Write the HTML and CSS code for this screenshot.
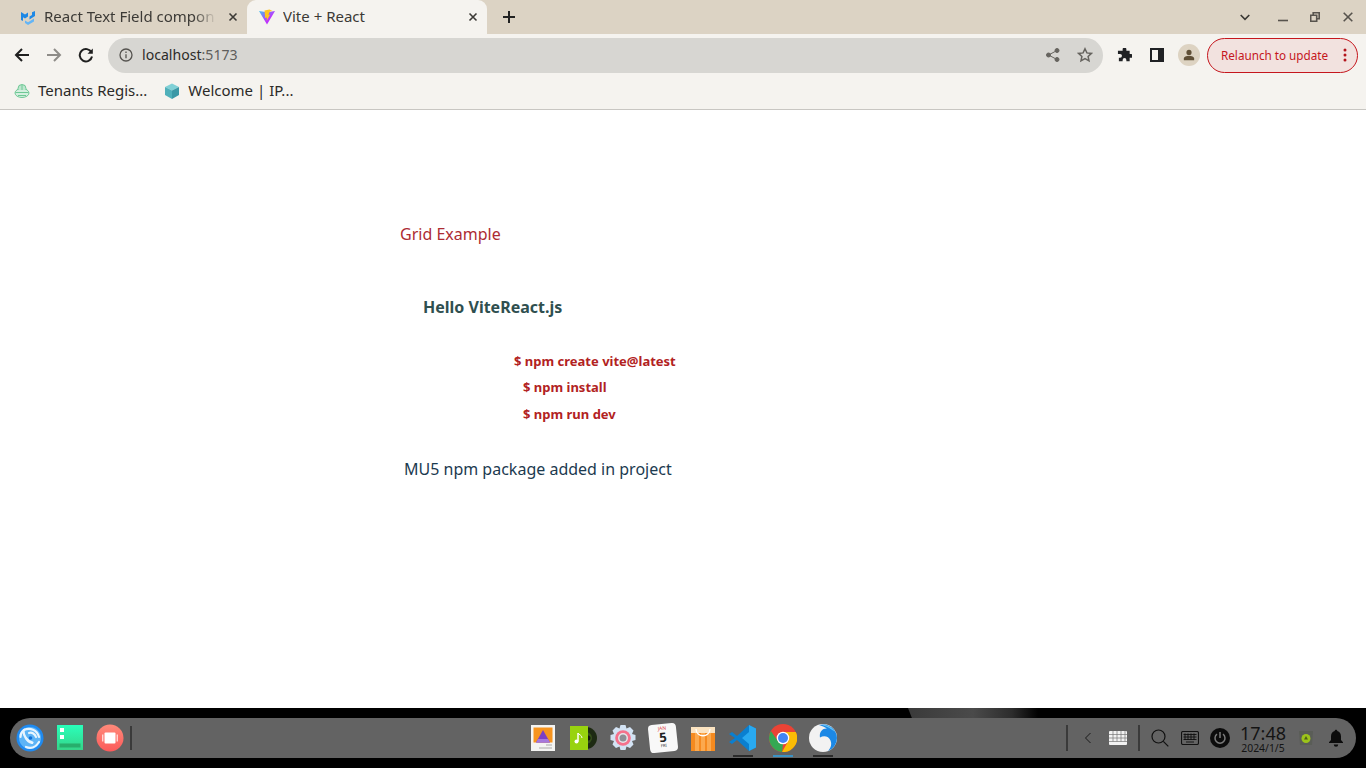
FILE: index.html
```html
<!DOCTYPE html>
<html>
	<head>
		<meta charset="utf-8">
		<title>Vite + React</title>
		<link rel="stylesheet" href="styles.css">
	</head>
	<body>
		<div class="tabstrip">
			<div class="tab">
				<svg class="favicon" viewBox="0 0 16 16"><path fill="#1e88e5" d="M1 3l4 2.500L8 3.500v4L5 9.500 3 8.200V12L1 11z"/><path fill="#1e88e5" d="M9.500 7.500L12 6V3.200l3-1.200v5l-5.500 3.500z"/><path fill="#64b5f6" d="M5 11.500l3 1.800 6-3.800v3L8 16l-3-2z"/></svg>
				<span class="tab-title fade">React Text Field compon</span>
				<svg class="tab-close" viewBox="0 0 10 10"><path d="M1.500 1.500l7 7M8.500 1.500l-7 7"/></svg>
			</div>
			<div class="tab active">
				<svg class="favicon" viewBox="0 0 16 16"><defs><linearGradient id="vg" x1="0" y1="0" x2="1" y2="1"><stop offset="0" stop-color="#41c5ee"/><stop offset=".6" stop-color="#bd34fe"/></linearGradient></defs><path fill="url(#vg)" d="M0 2l8 1.300L16 2 8 15.500z"/><path fill="#ffc51f" d="M10.500 .5L5.500 1.500l.7 7.500 1.800-.5-.4 3.500 3.600-6.500-1.800.4 1.400-3.400 2.700-.5z"/></svg>
				<span class="tab-title">Vite + React</span>
				<svg class="tab-close" viewBox="0 0 10 10"><path d="M1.500 1.500l7 7M8.500 1.500l-7 7"/></svg>
			</div>
			<svg class="new-tab" viewBox="0 0 14 14"><path d="M7 1v12M1 7h12"/></svg>
			<div class="window-btns">
				<svg class="win-chevron" viewBox="0 0 10 7"><path d="M.7 1l4.300 4.300L9.300 1"/></svg>
				<svg class="win-min" viewBox="0 0 10 10"><path d="M0 8.500h10"/></svg>
				<svg class="win-max" viewBox="0 0 10 10"><path d="M.7 3.200h6v6h-6zM3.200 3.200V.7h6v6H6.700"/></svg>
				<svg class="win-close" viewBox="0 0 10 10"><path d="M.7.7l8.600 8.600M9.300.7L.7 9.300"/></svg>
			</div>
		</div>

		<div class="toolbar">
			<svg class="nav" viewBox="0 0 16 16"><path d="M15 8H2M8 2L2 8l6 6"/></svg>
			<svg class="nav off" viewBox="0 0 16 16"><path d="M1 8h13M8 2l6 6-6 6"/></svg>
			<svg class="nav" viewBox="0 0 16 16"><path d="M13.500 5.500A6.200 6.200 0 1 0 14 9.500"/><path class="solid" d="M14.800 1.500v5.300H9.500z"/></svg>
			<div class="omnibox">
				<svg class="info" viewBox="0 0 14 14"><circle cx="7" cy="7" r="6"/><path d="M7 6.200v4M7 3.500v1.400"/></svg>
				<span class="url">localhost<span class="port">:5173</span></span>
				<svg class="share" viewBox="0 0 14 14"><circle cx="11" cy="2.500" r="2"/><circle cx="11" cy="11.500" r="2"/><circle cx="2.500" cy="7" r="2"/><path d="M11 2.500L2.500 7l8.500 4.500"/></svg>
				<svg class="star" viewBox="0 0 16 16"><path d="M8 1.800l1.900 4.100 4.500.5-3.300 3 .9 4.400L8 11.600l-4 2.200.9-4.400-3.300-3 4.500-.5z"/></svg>
			</div>
			<svg class="puzzle" viewBox="0 0 16 16"><path d="M6 1.500a2 2 0 0 1 4 0V3h3.500v3.500H15a2 2 0 0 1 0 4h-1.500V14H10v-1.300a2 2 0 0 0-4 0V14H2v-3.700h1.300a2 2 0 0 0 0-4H1V3h5z"/></svg>
			<div class="side-panel"><span></span></div>
			<div class="avatar">
				<svg viewBox="0 0 14 14"><circle cx="7" cy="4" r="3"/><path d="M1 13v-2c0-2 3-3.200 6-3.200s6 1.200 6 3.200v2z"/></svg>
			</div>
			<div class="relaunch">
				<span>Relaunch to update</span>
				<svg viewBox="0 0 4 14"><circle cx="2" cy="2" r="1.500"/><circle cx="2" cy="7" r="1.500"/><circle cx="2" cy="12" r="1.500"/></svg>
			</div>
		</div>

		<div class="bookmarks">
			<div class="bookmark">
				<svg viewBox="0 0 16 16" fill="none" stroke="#6ec895"><ellipse cx="8" cy="10" rx="7" ry="4.500" fill="#d4efdf"/><path d="M4 7V5.500a4 4 0 0 1 8 0V7" fill="#bfe6cf"/><path d="M1.500 9.500h13M4 12.500h8M8 2v5"/></svg>
				<span>Tenants Regis...</span>
			</div>
			<div class="bookmark">
				<svg viewBox="0 0 16 16"><path fill="#7fd0d6" d="M8 .5l7 3.500L8 7.500 1 4z"/><path fill="#4fb0ba" d="M1 4l7 3.500V16l-7-4z"/><path fill="#3b98a6" d="M15 4L8 7.500V16l7-4z"/></svg>
				<span>Welcome | IP...</span>
			</div>
		</div>

		<main class="page">
			<p class="heading">Grid Example</p>
			<p class="hello">Hello ViteReact.js</p>
			<p class="cmd first">$ npm create vite@latest</p>
			<p class="cmd second">$ npm install</p>
			<p class="cmd third">$ npm run dev</p>
			<p class="note">MU5 npm package added in project</p>
		</main>

		<div class="taskbar">
			<div class="wallpaper"></div>
			<div class="dock">
				<div class="dock-left">
					<svg class="ic" viewBox="0 0 28 28"><circle cx="14" cy="14" r="13.500" fill="#1f8af0"/><circle cx="14" cy="14" r="11" fill="#5db4f6"/><g fill="none" stroke="#e8f5fe" stroke-width="2.200" stroke-linecap="round"><path d="M8 6c6-3 13 0 15 7"/><path d="M4.500 13c0-3 1-5 3-6.500 0 6 3 10 9 12"/><path d="M10 23c5 2 10 0 13-5"/><path d="M13 9c3-1 6 1 7 4"/><path d="M10 14c1 3 3 4.500 6 5"/></g><circle cx="14.500" cy="14" r="1.800" fill="#1270d8"/></svg>
					<svg class="ic" viewBox="0 0 28 28"><defs><linearGradient id="gs" x1="0" y1="0" x2="0" y2="1"><stop offset="0" stop-color="#2affbb"/><stop offset="1" stop-color="#35d488"/></linearGradient></defs><rect x="1" y="1" width="26" height="25" fill="url(#gs)"/><rect x="4" y="4" width="4" height="4" fill="#fff"/><rect x="4" y="11" width="4" height="4" fill="#fff"/><rect x="3.500" y="19.500" width="21" height="4" fill="#27ae6c"/></svg>
					<svg class="ic" viewBox="0 0 28 28"><defs><linearGradient id="rd" x1="0" y1="0" x2="0" y2="1"><stop offset="0" stop-color="#ff8a7a"/><stop offset="1" stop-color="#fb5a5a"/></linearGradient></defs><circle cx="14" cy="14" r="13.500" fill="url(#rd)"/><rect x="8.500" y="8.500" width="11" height="11" rx="1" fill="#fff"/><path d="M6.800 10.500v7M21.200 10.500v7" stroke="#fff"/></svg>
					<span class="divider"></span>
				</div>
				<div class="dock-center">
					<svg class="ic" viewBox="0 0 28 28"><rect x="2" y="1" width="24" height="26" fill="#f4f4f2"/><rect x="4.500" y="3.500" width="19" height="15" fill="#f7941e"/><path d="M14 6l7 12.500H7z" fill="#7c3fc4"/><path d="M9 15h10l2 3.500H7z" fill="#a678dc"/><path d="M17 21h6M10 24h13" stroke="#aaa"/></svg>
					<svg class="ic" viewBox="0 0 28 28"><circle cx="17" cy="14" r="11" fill="#1d2a12"/><circle cx="17" cy="14" r="6" fill="#35501a"/><circle cx="19" cy="14" r="2.500" fill="#111"/><rect x="1" y="2" width="18" height="24" fill="#98d30f"/><path d="M9 9v8.500" stroke="#fff" stroke-width="1.500"/><path d="M9 9c1 2 4 2 4 5" stroke="#fff" fill="none"/><circle cx="7.500" cy="17.500" r="2" fill="#fff"/></svg>
					<svg class="ic" viewBox="0 0 28 28"><path fill="#d3e3f4" d="M11.500 1h5l1 3.500 3.500-1.500 3.500 3.500-1.500 3.500 3.500 1v5l-3.500 1 1.500 3.500-3.500 3.500-3.500-1.500-1 3.500h-5l-1-3.500-3.500 1.500-3.500-3.500 1.500-3.500-3.500-1v-5l3.500-1-1.500-3.500L7 3l3.500 1.500z"/><circle cx="14" cy="14" r="7.800" fill="#f5718c"/><circle cx="14" cy="14" r="5" fill="#e6e6ea"/><circle cx="14" cy="14" r="3.500" fill="#8e8e96"/></svg>
					<div class="calendar"><span class="cal-month">JAN</span><span class="cal-day">5</span><span class="cal-week">FRI</span></div>
					<svg class="ic" viewBox="0 0 28 28"><rect x="2" y="3" width="24" height="24" fill="#fbe3c0"/><path d="M2 9h24v18H2z" fill="#f58a1f"/><path d="M6 9h4v18H6zM12 9h4v18h-4zM18 9h4v18h-4z" fill="#fba94e"/><path d="M7 5c0 9 14 9 14 0" fill="none" stroke="#fff" stroke-width="1.300"/></svg>
					<div class="running dark">
						<svg class="ic" viewBox="0 0 28 28"><path fill="#0a7fd0" d="M20 1l7 3.500v19L20 27 8 16l-5 4-3-2 6-4-6-4 3-2 5 4z"/><path fill="#29a9f0" d="M20 1l7 3.500v19L20 27zM20 8l-7 6 7 6z"/></svg>
					</div>
					<div class="running blue">
						<svg class="ic" viewBox="0 0 28 28"><circle cx="14" cy="14" r="14" fill="#ea4335"/><path fill="#fbbc05" d="M14 8h12.800A14 14 0 0 1 13 28l6-10.400A6 6 0 0 0 14 8z"/><path fill="#34a853" d="M1.900 7l6.900 10A6 6 0 0 0 14 20l-1 8A14 14 0 0 1 1.900 7z"/><circle cx="14" cy="14" r="6.300" fill="#fff"/><circle cx="14" cy="14" r="5" fill="#4285f4"/></svg>
					</div>
					<div class="running dark">
						<svg class="ic" viewBox="0 0 28 28"><circle cx="14" cy="14" r="14" fill="#f2f2f2"/><path fill="#1b88e6" d="M10 1A14 14 0 0 1 28 14a14 14 0 0 1-9 13c3-3 4-7 2.500-10.500C20 12.500 15 11 11 13.500 10 9 13 4 18 4.500 15.500 3 13 1.800 10 1z"/><path fill="#66c6f7" d="M13 1c5-.5 10 2 13 7-4-3.500-8-5.500-13-7z"/></svg>
					</div>
				</div>
				<div class="dock-right">
					<span class="divider tall"></span>
					<svg class="tray chevron" viewBox="0 0 8 12"><path d="M6.500 1L1.500 6l5 5"/></svg>
					<svg class="tray softkbd" viewBox="0 0 18 14"><rect width="18" height="14" rx="1" fill="#f2f2f2"/><path d="M0 3.500h18M0 7h18M0 10.500h18M4 0v10.500M8 0v10.500M12 0v10.500M16 0v10.500" stroke="#777" stroke-width=".7"/></svg>
					<span class="divider tall"></span>
					<svg class="tray search" viewBox="0 0 18 18"><circle cx="7.500" cy="7.500" r="6.500"/><path d="M12.300 12.300l5 5"/></svg>
					<svg class="tray kbd" viewBox="0 0 18 14"><rect x=".5" y=".5" width="17" height="13" rx="1.500"/><path d="M2.500 3.500h13M2.500 6h13M2.500 8.500h13M5 11h8M4 2.500v6.500M7 2.500v6.500M10 2.500v6.500M13 2.500v6.500" stroke-width=".9"/></svg>
					<div class="power"><svg viewBox="0 0 14 14"><path d="M4 3.200a5 5 0 1 0 6 0M7 1v6"/></svg></div>
					<div class="clock"><span class="time">17:48</span><span class="date">2024/1/5</span></div>
					<svg class="tray trash" viewBox="0 0 16 16"><path fill="#5a5d57" d="M1 1h14l-1 14H2z"/><circle cx="8" cy="8.500" r="4.500" fill="#9cc41a"/><path d="M8 6l2 3.500H6z" fill="#4e6016"/></svg>
					<svg class="tray bell" viewBox="0 0 16 18"><path d="M8 .8c.8 0 1.300.6 1.300 1.300C11.800 2.700 13 5 13 7.500v3.500l2 2.300v.7H1v-.7L3 11V7.500C3 5 4.200 2.700 6.700 2.100 6.700 1.400 7.200.8 8 .8z"/><path d="M5.800 15.500h4.400a2.200 2.200 0 0 1-4.400 0z"/></svg>
				</div>
			</div>
		</div>
	</body>
</html>
```

FILE: styles.css
```css
* {
	box-sizing: border-box;
}

html, body {
	height: 100%;
}

body {
	margin: 0;
	display: flex;
	flex-direction: column;
	overflow: hidden;
	background: #fff;
	font-family: "Noto Sans", sans-serif;
}

svg {
	display: block;
	flex: none;
}

/* tab strip */
.tabstrip {
	display: flex;
	align-items: flex-end;
	height: 34px;
	flex: none;
	padding-left: 7px;
	background: #dcd3c4;
}

.tab {
	display: flex;
	align-items: center;
	width: 240px;
	height: 34px;
	padding: 0 9px 0 13px;
	font-size: 15px;
	color: #3c3a36;
}

.tab.active {
	padding-left: 12px;
	background: #f5f3ef;
	border-radius: 9px 9px 0 0;
}

.favicon {
	width: 16px;
	height: 16px;
	margin-right: 8px;
}

.tab-title {
	flex: 1;
	overflow: hidden;
	white-space: nowrap;
	line-height: 20px;
	padding-bottom: 3px;
}

.tab-title.fade {
	-webkit-mask-image: linear-gradient(to right, #000 85%, transparent 98%);
	mask-image: linear-gradient(to right, #000 85%, transparent 98%);
}

.tab-close {
	width: 10px;
	height: 10px;
	margin-left: 8px;
	fill: none;
	stroke: #3c3a36;
	stroke-width: 1.6;
}

.new-tab {
	width: 14px;
	height: 14px;
	margin: 0 0 10px 15px;
	fill: none;
	stroke: #222;
	stroke-width: 2;
}

.window-btns {
	display: flex;
	align-items: center;
	gap: 22px;
	height: 34px;
	margin-left: auto;
	padding-right: 13px;
}

.window-btns svg {
	width: 10px;
	height: 10px;
	fill: none;
	stroke: #57534d;
	stroke-width: 1.600;
}

.window-btns .win-chevron {
	height: 7px;
	stroke: #3a3834;
	margin-right: 6px;
}

.window-btns .win-max {
	margin-right: 1px;
}

/* toolbar */
.toolbar {
	display: flex;
	align-items: center;
	height: 42px;
	flex: none;
	padding: 0 8px 0 14px;
	background: #f5f3ef;
}

.nav {
	width: 16px;
	height: 16px;
	margin-right: 16px;
	fill: none;
	stroke: #1f1f1f;
	stroke-width: 2;
}

.nav.off {
	stroke: #8e8c88;
}

.nav .solid {
	fill: #1f1f1f;
	stroke: none;
}

.omnibox {
	display: flex;
	align-items: center;
	width: 995px;
	height: 35px;
	margin-left: -2px;
	padding: 0 10px 0 11px;
	border-radius: 18px;
	background: #d7d6d2;
	font-size: 14.100px;
}

.info {
	width: 14px;
	height: 14px;
	margin-right: 9px;
	fill: none;
	stroke: #55534f;
	stroke-width: 1.300;
}

.url {
	flex: 1;
	line-height: 20px;
	padding-bottom: 1px;
	color: #2c2b29;
}

.port {
	color: #5f5e5b;
}

.share {
	width: 14px;
	height: 14px;
	margin-right: 17px;
	fill: #66645f;
	stroke: #66645f;
	stroke-width: 1;
}

.share path {
	fill: none;
}

.star {
	width: 16px;
	height: 16px;
	fill: none;
	stroke: #66645f;
	stroke-width: 1.500;
}

.puzzle {
	width: 15px;
	height: 15px;
	margin-left: 14px;
	fill: #202124;
}

.side-panel {
	width: 14px;
	height: 14px;
	margin-left: 18px;
	padding: 2px 6px 2px 2px;
	background: #202124;
}

.side-panel span {
	display: block;
	height: 100%;
	background: #f5f3ef;
}

.avatar {
	display: flex;
	align-items: center;
	justify-content: center;
	width: 22px;
	height: 22px;
	margin-left: 14px;
	border-radius: 50%;
	background: #ddd3c2;
}

.avatar svg {
	width: 12px;
	height: 12px;
	fill: #5f4f36;
}

.relaunch {
	display: flex;
	align-items: center;
	justify-content: space-between;
	width: 151px;
	height: 35px;
	margin-left: 7px;
	padding: 0 10px 0 13px;
	border: 1px solid #c5161d;
	border-radius: 18px;
	background: #f2e2df;
	color: #c5161d;
	font-size: 11.700px;
}

.relaunch svg {
	width: 4px;
	height: 14px;
	fill: #b3141b;
}

/* bookmarks */
.bookmarks {
	display: flex;
	align-items: center;
	gap: 17px;
	height: 34px;
	flex: none;
	padding: 0 0 4px 14px;
	border-bottom: 1px solid #c8c6c2;
	background: #f5f3ef;
	font-size: 15px;
	color: #2b2a28;
}

.bookmark {
	display: flex;
	align-items: center;
	gap: 8px;
}

.bookmark svg {
	width: 16px;
	height: 16px;
}

.bookmark span {
	line-height: 20px;
	padding-bottom: 2px;
}

/* page */
.page {
	flex: 1;
	padding: 113px 0 0 400px;
}

.page p {
	margin: 0;
}

.heading {
	font-size: 16px;
	line-height: 22px;
	color: #ad2c33;
}

.page .hello {
	margin: 51px 0 0 23px;
	font-size: 16px;
	font-weight: 700;
	line-height: 22px;
	color: #2f4f4f;
}

.cmd {
	font-size: 13px;
	font-weight: 700;
	line-height: 18px;
	color: #b22222;
}

.page .cmd.first {
	margin: 34px 0 0 114px;
}

.page .cmd.second {
	margin: 8px 0 0 123px;
}

.page .cmd.third {
	margin: 9px 0 0 123px;
}

.page .note {
	margin: 35px 0 0 4px;
	font-size: 16px;
	line-height: 22px;
	color: #1c3a4f;
}

/* deepin dock */
.taskbar {
	position: relative;
	height: 60px;
	flex: none;
	padding: 10px;
	background: #000;
}

.wallpaper {
	position: absolute;
	left: 908px;
	top: 0;
	width: 130px;
	height: 10px;
	background: linear-gradient(to right, #3a3a3a, #4a4a4a 50%, #2c2c2c 80%, #000);
	clip-path: polygon(0 0, 100% 0, 100% 100%, 3% 100%);
}

.dock {
	position: relative;
	display: grid;
	grid-template-columns: 1fr auto 1fr;
	align-items: center;
	height: 40px;
	border-radius: 20px;
	background: #636363;
}

.dock-left,
.dock-center,
.dock-right {
	display: flex;
	align-items: center;
	height: 40px;
}

.ic {
	width: 28px;
	height: 28px;
}

.dock-left {
	gap: 12px;
	padding-left: 6px;
}

.dock-left .divider {
	margin-left: -6px;
}

.divider {
	display: block;
	width: 2px;
	height: 24px;
	background: #3a3a3a;
}

.divider.tall {
	height: 26px;
}

.dock-center {
	gap: 12px;
}

.running {
	position: relative;
	height: 40px;
	display: flex;
	align-items: center;
}

/* underline below a running app */
.running::after {
	content: "";
	position: absolute;
	left: 4px;
	right: 4px;
	bottom: 1px;
	height: 2px;
}

.running.dark::after {
	background: #2b2b2b;
}

.running.blue::after {
	background: #3a92c4;
}

.calendar {
	display: flex;
	flex-direction: column;
	align-items: center;
	width: 28px;
	height: 28px;
	border-radius: 4px;
	background: #f8f8f8;
	transform: rotate(-6deg);
	color: #222;
	line-height: 1;
}

.cal-month {
	margin-top: 2px;
	font-size: 5px;
	color: #e04848;
}

.cal-day {
	font-size: 13px;
	font-weight: 700;
}

.cal-week {
	font-size: 4px;
}

.dock-right {
	justify-content: flex-end;
	padding-right: 12px;
}

.tray {
	fill: none;
	stroke: #111;
}

.chevron {
	width: 8px;
	height: 12px;
	margin: 0 17px 0 16px;
	stroke: #1a1a1a;
	stroke-width: 1;
}

.softkbd {
	width: 18px;
	height: 14px;
	margin-right: 11px;
	stroke: none;
}

.search {
	width: 18px;
	height: 18px;
	margin: 0 12px 0 11px;
	stroke-width: 1.200;
}

.kbd {
	width: 18px;
	height: 14px;
	margin-right: 11px;
	stroke-width: 1.100;
}

.power {
	display: flex;
	align-items: center;
	justify-content: center;
	width: 20px;
	height: 20px;
	border-radius: 50%;
	background: #0c0c0c;
}

.power svg {
	width: 14px;
	height: 14px;
	fill: none;
	stroke: #7a7a7a;
	stroke-width: 1.500;
}

.clock {
	display: flex;
	flex-direction: column;
	align-items: center;
	margin-left: 10px;
	padding-top: 1px;
	color: #141414;
}

.time {
	font-size: 18px;
	line-height: 18px;
}

.date {
	margin-top: 1px;
	font-size: 10.400px;
	line-height: 11px;
}

.trash {
	width: 16px;
	height: 16px;
	margin-left: 12px;
	stroke: none;
}

.bell {
	width: 16px;
	height: 18px;
	margin-left: 14px;
	fill: #0c0c0c;
	stroke: none;
}
```
